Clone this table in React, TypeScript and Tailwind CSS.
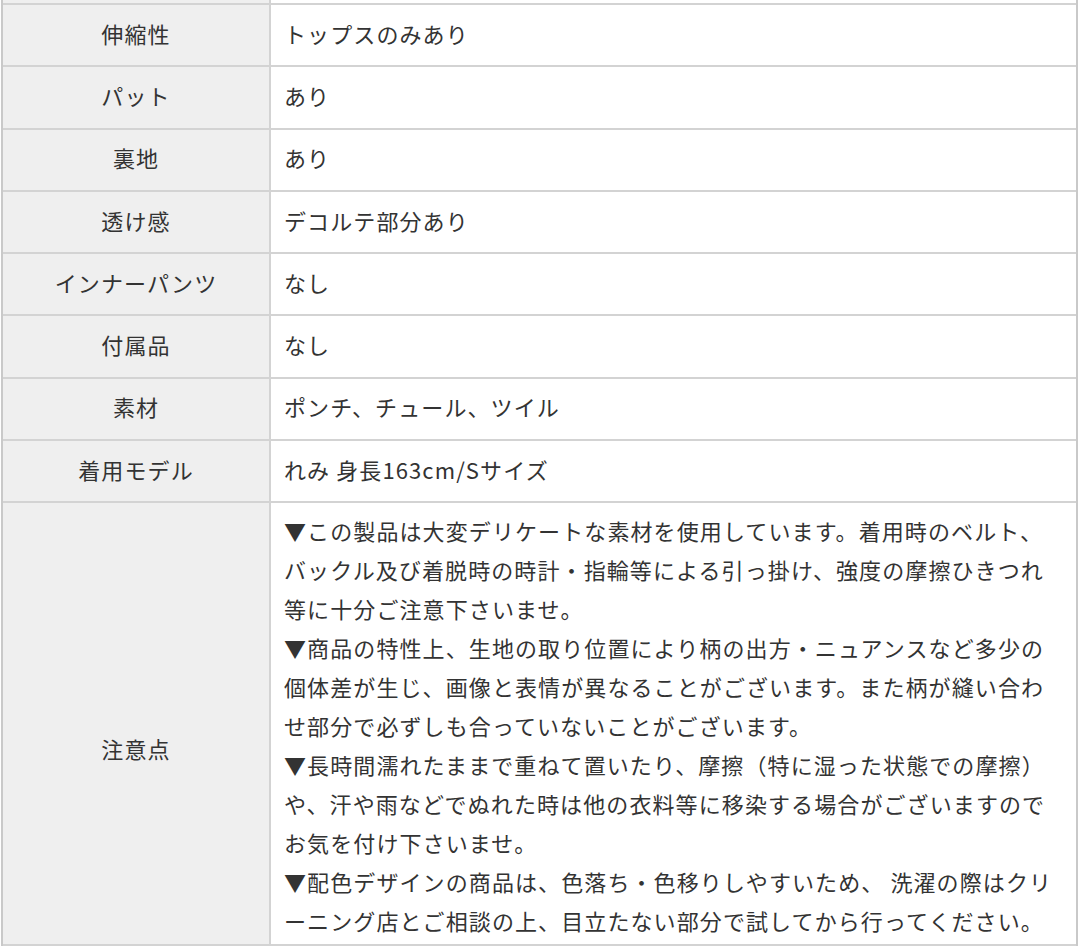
const rows: { label: string; value: string }[] = [
  { label: '伸縮性', value: 'トップスのみあり' },
  { label: 'パット', value: 'あり' },
  { label: '裏地', value: 'あり' },
  { label: '透け感', value: 'デコルテ部分あり' },
  { label: 'インナーパンツ', value: 'なし' },
  { label: '付属品', value: 'なし' },
  { label: '素材', value: 'ポンチ、チュール、ツイル' },
  { label: '着用モデル', value: 'れみ 身長163cm/Sサイズ' },
];

const notes = [
  '▼この製品は大変デリケートな素材を使用しています。着用時のベルト、',
  'バックル及び着脱時の時計・指輪等による引っ掛け、強度の摩擦ひきつれ',
  '等に十分ご注意下さいませ。',
  '▼商品の特性上、生地の取り位置により柄の出方・ニュアンスなど多少の',
  '個体差が生じ、画像と表情が異なることがございます。また柄が縫い合わ',
  'せ部分で必ずしも合っていないことがございます。',
  '▼長時間濡れたままで重ねて置いたり、摩擦（特に湿った状態での摩擦）',
  'や、汗や雨などでぬれた時は他の衣料等に移染する場合がございますので',
  'お気を付け下さいませ。',
  '▼配色デザインの商品は、色落ち・色移りしやすいため、 洗濯の際はクリ',
  'ーニング店とご相談の上、目立たない部分で試してから行ってください。',
];

export default function App() {
  return (
    <div
      className="min-h-screen bg-white text-[#333] text-[22px] tracking-[1.1px]"
      style={{ fontFamily: '"Noto Sans CJK JP", "Noto Sans", sans-serif' }}
    >
      <div className="ml-[1px] w-[1077px] border-x-2 border-[#c9c9c9]">
        {/* tail of the previous row */}
        <div className="flex h-[3px]">
          <div className="w-[268px] bg-[#efefef] border-r-2 border-[#d3d3d3]" />
          <div className="flex-1 bg-white" />
        </div>

        {rows.map(r => (
          <div key={r.label} className="flex h-[62.3px] border-t-2 border-[#d3d3d3]">
            <div className="w-[268px] shrink-0 bg-[#efefef] border-r-2 border-[#d3d3d3] flex items-center justify-center pb-[4px]">
              {r.label}
            </div>
            <div className="flex-1 flex items-center pl-[13px] pb-[4px]">{r.value}</div>
          </div>
        ))}

        {/* notes row */}
        <div className="flex border-y-2 border-[#d3d3d3]">
          <div className="w-[268px] shrink-0 bg-[#efefef] border-r-2 border-[#d3d3d3] flex items-center justify-center pt-[50px]">
            注意点
          </div>
          <div className="flex-1 pl-[13px] pt-[8px] pb-[4px] leading-[39px]">
            {notes.map(line => (
              <div key={line} className="whitespace-nowrap">{line}</div>
            ))}
          </div>
        </div>
      </div>
    </div>
  );
}
